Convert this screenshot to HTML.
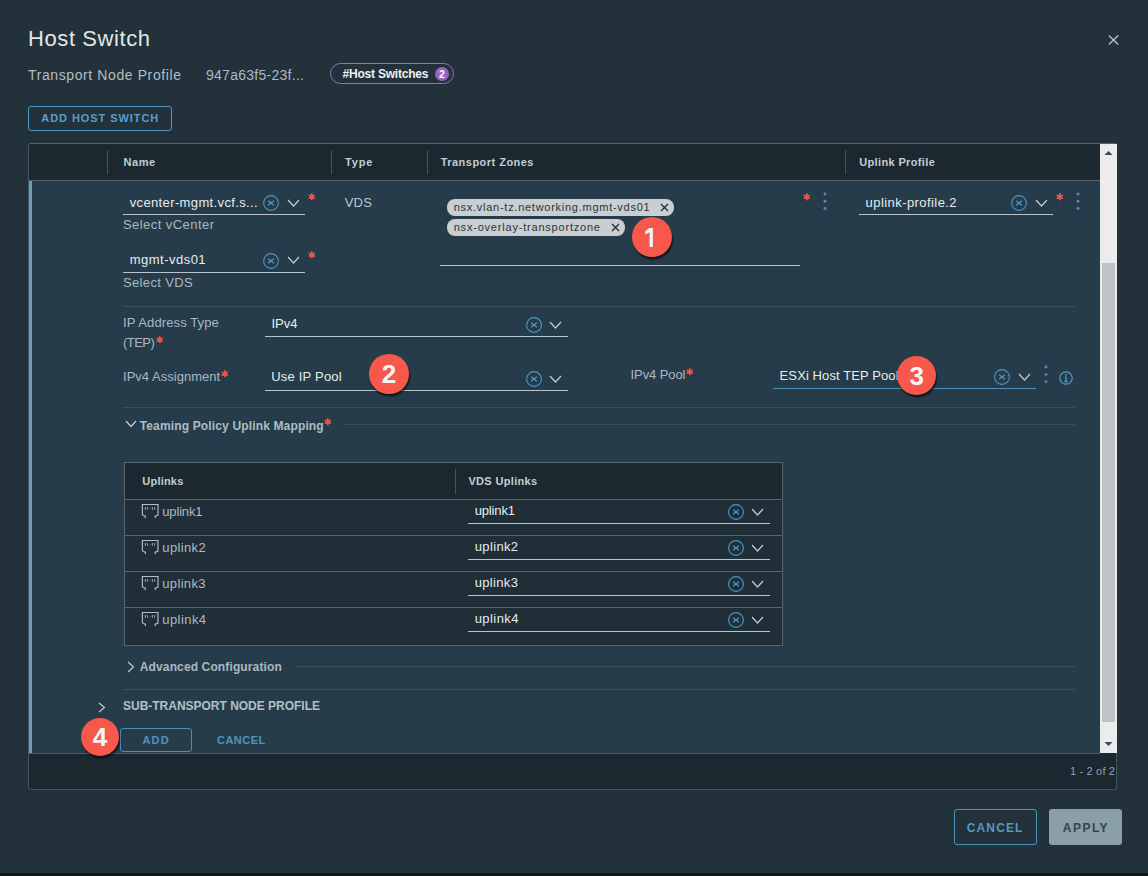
<!DOCTYPE html><html><head><meta charset="utf-8"><style>html,body{margin:0;padding:0;}body{width:1148px;height:876px;overflow:hidden;position:relative;background:#22313a;font-family:'Liberation Sans', sans-serif;}</style></head><body><div style="position:absolute;left:0px;top:873px;width:1148px;height:3px;background:#0f161a"></div>
<div style="position:absolute;left:28px;top:28.38px;font:400 22px/22px 'Liberation Sans', sans-serif;color:#e1e7ea;white-space:nowrap;letter-spacing:0.584px;">Host Switch</div>
<svg style="position:absolute;left:1108px;top:35px" width="11" height="10" viewBox="0 0 11 10"><path d="M0.8 0.5L10.2 9.5M10.2 0.5L0.8 9.5" stroke="#b8c6ce" stroke-width="1.3"/></svg>
<div style="position:absolute;left:28px;top:68.15px;font:400 14px/14px 'Liberation Sans', sans-serif;color:#b0bec6;white-space:nowrap;letter-spacing:0.603px;">Transport Node Profile</div>
<div style="position:absolute;left:206px;top:68.15px;font:400 14px/14px 'Liberation Sans', sans-serif;color:#a9b9c3;white-space:nowrap;letter-spacing:0.272px;">947a63f5-23f...</div>
<div style="position:absolute;left:330px;top:63px;width:124px;height:21px;box-sizing:border-box;border:1px solid #9a6cc4;border-radius:11px"></div>
<div style="position:absolute;left:342.5px;top:67.84px;font:700 12px/12px 'Liberation Sans', sans-serif;color:#eef0f2;white-space:nowrap;letter-spacing:-0.208px;">#Host Switches</div>
<div style="position:absolute;left:435px;top:67px;width:14px;height:14px;border-radius:50%;background:#9862c0"></div>
<div style="position:absolute;left:439.1px;top:69.01px;font:700 10.5px/10.5px 'Liberation Sans', sans-serif;color:#ffffff;white-space:nowrap;">2</div>
<div style="position:absolute;left:28px;top:106px;width:144px;height:25px;box-sizing:border-box;border:1px solid #5597c4;border-radius:3px"></div>
<div style="position:absolute;left:41.3px;top:112.69px;font:700 11px/11px 'Liberation Sans', sans-serif;color:#599dc9;white-space:nowrap;letter-spacing:0.936px;">ADD HOST SWITCH</div>
<div style="position:absolute;left:28px;top:143px;width:1089px;height:647px;box-sizing:border-box;border:1px solid #44555f;border-top-color:#56656e;border-radius:3px;background:#1b2830"></div>
<div style="position:absolute;left:107px;top:150px;width:1px;height:24px;background:#45535c"></div>
<div style="position:absolute;left:331px;top:150px;width:1px;height:24px;background:#45535c"></div>
<div style="position:absolute;left:427px;top:150px;width:1px;height:24px;background:#45535c"></div>
<div style="position:absolute;left:845px;top:150px;width:1px;height:24px;background:#45535c"></div>
<div style="position:absolute;left:123.4px;top:157.19px;font:700 11px/11px 'Liberation Sans', sans-serif;color:#c3cdd3;white-space:nowrap;letter-spacing:0.610px;">Name</div>
<div style="position:absolute;left:344.9px;top:157.19px;font:700 11px/11px 'Liberation Sans', sans-serif;color:#c3cdd3;white-space:nowrap;letter-spacing:0.914px;">Type</div>
<div style="position:absolute;left:440.7px;top:157.19px;font:700 11px/11px 'Liberation Sans', sans-serif;color:#c3cdd3;white-space:nowrap;letter-spacing:0.472px;">Transport Zones</div>
<div style="position:absolute;left:859.2px;top:157.19px;font:700 11px/11px 'Liberation Sans', sans-serif;color:#c3cdd3;white-space:nowrap;letter-spacing:0.361px;">Uplink Profile</div>
<div style="position:absolute;left:29px;top:180px;width:1071px;height:1px;background:#55656f"></div>
<div style="position:absolute;left:29px;top:181px;width:1071px;height:572px;background:#263c4a"></div>
<div style="position:absolute;left:29px;top:181px;width:3px;height:572px;background:#6a9fba"></div>
<div style="position:absolute;left:1100px;top:144px;width:17px;height:609px;background:#ececec"></div>
<div style="position:absolute;left:1102px;top:263px;width:13px;height:459px;background:#bec3c6"></div>
<svg style="position:absolute;left:1104px;top:150px" width="9" height="6" viewBox="0 0 9 6"><path d="M0.5 5L4.5 1L8.5 5Z" fill="#3a4a54"/></svg>
<svg style="position:absolute;left:1104px;top:741px" width="9" height="6" viewBox="0 0 9 6"><path d="M0.5 1L4.5 5L8.5 1Z" fill="#3a4a54"/></svg>
<div style="position:absolute;left:29px;top:753px;width:1071px;height:1px;background:#4a5a64"></div>
<div style="position:absolute;left:1070px;top:766.29px;font:400 11px/11px 'Liberation Sans', sans-serif;color:#8ea2ae;white-space:nowrap;letter-spacing:0.175px;">1 - 2 of 2</div>
<div style="position:absolute;left:129.7px;top:195.60px;font:400 13px/13px 'Liberation Sans', sans-serif;color:#e6ecef;white-space:nowrap;letter-spacing:0.368px;">vcenter-mgmt.vcf.s...</div>
<div style="position:absolute;left:123px;top:214px;width:182px;height:1px;background:#b9c4ca"></div>
<svg style="position:absolute;left:263.0px;top:195.0px" width="16" height="16" viewBox="0 0 16 16"><circle cx="8.0" cy="8.0" r="7.4" fill="none" stroke="#4a98c8" stroke-width="1.1"/><path d="M5.1 5.7L10.9 10.3M10.9 5.7L5.1 10.3" stroke="#4a98c8" stroke-width="1.3"/></svg>
<svg style="position:absolute;left:286.9px;top:198.5px" width="13" height="8" viewBox="-1 -1 13 8"><path d="M0 0L5.5 6L11 0" fill="none" stroke="#c3ccd2" stroke-width="1.2"/></svg>
<svg style="position:absolute;left:308.2px;top:193.2px" width="7.6" height="7.6" viewBox="-1 -1 7.6 7.6"><path d="M2.80 0.00L2.80 5.60M0.38 1.40L5.22 4.20M0.38 4.20L5.22 1.40" stroke="#ef5548" stroke-width="1.75" stroke-linecap="round"/></svg>
<div style="position:absolute;left:123px;top:218.00px;font:400 13px/13px 'Liberation Sans', sans-serif;color:#a9b8c1;white-space:nowrap;letter-spacing:0.441px;">Select vCenter</div>
<div style="position:absolute;left:129.7px;top:253.00px;font:400 13px/13px 'Liberation Sans', sans-serif;color:#e6ecef;white-space:nowrap;letter-spacing:0.485px;">mgmt-vds01</div>
<div style="position:absolute;left:123px;top:272px;width:182px;height:1px;background:#b9c4ca"></div>
<svg style="position:absolute;left:263.0px;top:252.5px" width="16" height="16" viewBox="0 0 16 16"><circle cx="8.0" cy="8.0" r="7.4" fill="none" stroke="#4a98c8" stroke-width="1.1"/><path d="M5.1 5.7L10.9 10.3M10.9 5.7L5.1 10.3" stroke="#4a98c8" stroke-width="1.3"/></svg>
<svg style="position:absolute;left:286.9px;top:256.0px" width="13" height="8" viewBox="-1 -1 13 8"><path d="M0 0L5.5 6L11 0" fill="none" stroke="#c3ccd2" stroke-width="1.2"/></svg>
<svg style="position:absolute;left:308.2px;top:251.2px" width="7.6" height="7.6" viewBox="-1 -1 7.6 7.6"><path d="M2.80 0.00L2.80 5.60M0.38 1.40L5.22 4.20M0.38 4.20L5.22 1.40" stroke="#ef5548" stroke-width="1.75" stroke-linecap="round"/></svg>
<div style="position:absolute;left:123px;top:275.60px;font:400 13px/13px 'Liberation Sans', sans-serif;color:#a9b8c1;white-space:nowrap;letter-spacing:0.357px;">Select VDS</div>
<div style="position:absolute;left:344.7px;top:196.30px;font:400 13px/13px 'Liberation Sans', sans-serif;color:#b9c6cd;white-space:nowrap;letter-spacing:0.233px;">VDS</div>
<div style="position:absolute;left:447px;top:199px;width:227px;height:16.5px;box-sizing:border-box;background:#c9ced1;border-radius:8px"></div>
<div style="position:absolute;left:453.7px;top:201.69px;font:400 11px/11px 'Liberation Sans', sans-serif;color:#26353f;white-space:nowrap;letter-spacing:0.737px;">nsx.vlan-tz.networking.mgmt-vds01</div>
<svg style="position:absolute;left:660px;top:202.5px" width="9" height="9" viewBox="0 0 9 9"><path d="M1 1L8 8M8 1L1 8" stroke="#1f2e36" stroke-width="1.3"/></svg>
<div style="position:absolute;left:447px;top:219px;width:178px;height:16.5px;box-sizing:border-box;background:#c9ced1;border-radius:8px"></div>
<div style="position:absolute;left:453.7px;top:221.69px;font:400 11px/11px 'Liberation Sans', sans-serif;color:#26353f;white-space:nowrap;letter-spacing:0.797px;">nsx-overlay-transportzone</div>
<svg style="position:absolute;left:611px;top:222.5px" width="9" height="9" viewBox="0 0 9 9"><path d="M1 1L8 8M8 1L1 8" stroke="#1f2e36" stroke-width="1.3"/></svg>
<div style="position:absolute;left:440px;top:265px;width:360px;height:1px;background:#b9c4ca"></div>
<svg style="position:absolute;left:802.9000000000001px;top:193.2px" width="7.6" height="7.6" viewBox="-1 -1 7.6 7.6"><path d="M2.80 0.00L2.80 5.60M0.38 1.40L5.22 4.20M0.38 4.20L5.22 1.40" stroke="#ef5548" stroke-width="1.75" stroke-linecap="round"/></svg>
<svg style="position:absolute;left:821.6px;top:190.5px" width="6" height="20.5" viewBox="0 0 6 20.5"><circle cx="3" cy="3.00" r="1.45" fill="#4f8fb8"/><circle cx="3" cy="10.30" r="1.45" fill="#4f8fb8"/><circle cx="3" cy="17.50" r="1.45" fill="#4f8fb8"/></svg>
<div style="position:absolute;left:865.6px;top:196.00px;font:400 13px/13px 'Liberation Sans', sans-serif;color:#e6ecef;white-space:nowrap;letter-spacing:0.430px;">uplink-profile.2</div>
<div style="position:absolute;left:859px;top:214px;width:194px;height:1px;background:#b9c4ca"></div>
<svg style="position:absolute;left:1011.0px;top:195.0px" width="16" height="16" viewBox="0 0 16 16"><circle cx="8.0" cy="8.0" r="7.4" fill="none" stroke="#4a98c8" stroke-width="1.1"/><path d="M5.1 5.7L10.9 10.3M10.9 5.7L5.1 10.3" stroke="#4a98c8" stroke-width="1.3"/></svg>
<svg style="position:absolute;left:1034.5px;top:199.0px" width="13" height="8" viewBox="-1 -1 13 8"><path d="M0 0L5.5 6L11 0" fill="none" stroke="#c3ccd2" stroke-width="1.2"/></svg>
<svg style="position:absolute;left:1055.7px;top:193.2px" width="7.6" height="7.6" viewBox="-1 -1 7.6 7.6"><path d="M2.80 0.00L2.80 5.60M0.38 1.40L5.22 4.20M0.38 4.20L5.22 1.40" stroke="#ef5548" stroke-width="1.75" stroke-linecap="round"/></svg>
<svg style="position:absolute;left:1075px;top:190.5px" width="6" height="20.5" viewBox="0 0 6 20.5"><circle cx="3" cy="3.00" r="1.45" fill="#4f8fb8"/><circle cx="3" cy="10.30" r="1.45" fill="#4f8fb8"/><circle cx="3" cy="17.50" r="1.45" fill="#4f8fb8"/></svg>
<div style="position:absolute;left:123px;top:306px;width:952px;height:1px;background:#3a4f5c"></div>
<div style="position:absolute;left:123px;top:316.40px;font:400 13px/13px 'Liberation Sans', sans-serif;color:#a9b8c1;white-space:nowrap;letter-spacing:0.114px;">IP Address Type</div>
<div style="position:absolute;left:123px;top:336.30px;font:400 13px/13px 'Liberation Sans', sans-serif;color:#a9b8c1;white-space:nowrap;letter-spacing:-0.538px;">(TEP)</div>
<svg style="position:absolute;left:155.79999999999998px;top:335.7px" width="7.6" height="7.6" viewBox="-1 -1 7.6 7.6"><path d="M2.80 0.00L2.80 5.60M0.38 1.40L5.22 4.20M0.38 4.20L5.22 1.40" stroke="#ef5548" stroke-width="1.75" stroke-linecap="round"/></svg>
<div style="position:absolute;left:271.4px;top:317.00px;font:400 13px/13px 'Liberation Sans', sans-serif;color:#e6ecef;white-space:nowrap;letter-spacing:0.061px;">IPv4</div>
<div style="position:absolute;left:265px;top:336px;width:303px;height:1px;background:#b9c4ca"></div>
<svg style="position:absolute;left:525.5px;top:316.8px" width="16" height="16" viewBox="0 0 16 16"><circle cx="8.0" cy="8.0" r="7.4" fill="none" stroke="#4a98c8" stroke-width="1.1"/><path d="M5.1 5.7L10.9 10.3M10.9 5.7L5.1 10.3" stroke="#4a98c8" stroke-width="1.3"/></svg>
<svg style="position:absolute;left:549.1px;top:320.5px" width="13" height="8" viewBox="-1 -1 13 8"><path d="M0 0L5.5 6L11 0" fill="none" stroke="#c3ccd2" stroke-width="1.2"/></svg>
<div style="position:absolute;left:123px;top:369.70px;font:400 13px/13px 'Liberation Sans', sans-serif;color:#a9b8c1;white-space:nowrap;letter-spacing:0.027px;">IPv4 Assignment</div>
<svg style="position:absolute;left:220.7px;top:369.7px" width="7.6" height="7.6" viewBox="-1 -1 7.6 7.6"><path d="M2.80 0.00L2.80 5.60M0.38 1.40L5.22 4.20M0.38 4.20L5.22 1.40" stroke="#ef5548" stroke-width="1.75" stroke-linecap="round"/></svg>
<div style="position:absolute;left:271.2px;top:370.40px;font:400 13px/13px 'Liberation Sans', sans-serif;color:#e6ecef;white-space:nowrap;letter-spacing:0.208px;">Use IP Pool</div>
<div style="position:absolute;left:265px;top:390px;width:303px;height:1px;background:#b9c4ca"></div>
<svg style="position:absolute;left:525.5px;top:370.7px" width="16" height="16" viewBox="0 0 16 16"><circle cx="8.0" cy="8.0" r="7.4" fill="none" stroke="#4a98c8" stroke-width="1.1"/><path d="M5.1 5.7L10.9 10.3M10.9 5.7L5.1 10.3" stroke="#4a98c8" stroke-width="1.3"/></svg>
<svg style="position:absolute;left:549.1px;top:374.5px" width="13" height="8" viewBox="-1 -1 13 8"><path d="M0 0L5.5 6L11 0" fill="none" stroke="#c3ccd2" stroke-width="1.2"/></svg>
<div style="position:absolute;left:630.6px;top:368.00px;font:400 13px/13px 'Liberation Sans', sans-serif;color:#a9b8c1;white-space:nowrap;letter-spacing:-0.095px;">IPv4 Pool</div>
<svg style="position:absolute;left:685.6px;top:367.7px" width="7.6" height="7.6" viewBox="-1 -1 7.6 7.6"><path d="M2.80 0.00L2.80 5.60M0.38 1.40L5.22 4.20M0.38 4.20L5.22 1.40" stroke="#ef5548" stroke-width="1.75" stroke-linecap="round"/></svg>
<div style="position:absolute;left:779.6px;top:368.80px;font:400 13px/13px 'Liberation Sans', sans-serif;color:#e6ecef;white-space:nowrap;letter-spacing:0.099px;">ESXi Host TEP Pool</div>
<div style="position:absolute;left:773px;top:388px;width:263px;height:1px;background:#4b8fb8"></div>
<svg style="position:absolute;left:994.0px;top:368.7px" width="16" height="16" viewBox="0 0 16 16"><circle cx="8.0" cy="8.0" r="7.4" fill="none" stroke="#4a98c8" stroke-width="1.1"/><path d="M5.1 5.7L10.9 10.3M10.9 5.7L5.1 10.3" stroke="#4a98c8" stroke-width="1.3"/></svg>
<svg style="position:absolute;left:1017.5px;top:372.5px" width="13" height="8" viewBox="-1 -1 13 8"><path d="M0 0L5.5 6L11 0" fill="none" stroke="#c3ccd2" stroke-width="1.2"/></svg>
<svg style="position:absolute;left:1043px;top:364.4px" width="6" height="20.600000000000023" viewBox="0 0 6 20.600000000000023"><circle cx="3" cy="3.00" r="1.45" fill="#4f8fb8"/><circle cx="3" cy="10.60" r="1.45" fill="#4f8fb8"/><circle cx="3" cy="17.60" r="1.45" fill="#4f8fb8"/></svg>
<svg style="position:absolute;left:1059px;top:371px" width="14" height="14" viewBox="0 0 14 14"><circle cx="7" cy="7" r="6.2" fill="none" stroke="#4b9fd0" stroke-width="1.2"/><path d="M7 5.8V10.5M5.5 10.5H8.5M6 6H7" stroke="#4b9fd0" stroke-width="1.3"/><circle cx="7" cy="3.9" r="0.9" fill="#4b9fd0"/></svg>
<div style="position:absolute;left:123px;top:407px;width:952px;height:1px;background:#3a4f5c"></div>
<svg style="position:absolute;left:125.0px;top:420.25px" width="12" height="7.5" viewBox="-1 -1 12 7.5"><path d="M0 0L5.0 5.5L10 0" fill="none" stroke="#c3ccd2" stroke-width="1.2"/></svg>
<div style="position:absolute;left:139.7px;top:419.74px;font:700 12px/12px 'Liberation Sans', sans-serif;color:#adbcc5;white-space:nowrap;letter-spacing:0.150px;">Teaming Policy Uplink Mapping</div>
<svg style="position:absolute;left:323.7px;top:418.2px" width="7.6" height="7.6" viewBox="-1 -1 7.6 7.6"><path d="M2.80 0.00L2.80 5.60M0.38 1.40L5.22 4.20M0.38 4.20L5.22 1.40" stroke="#ef5548" stroke-width="1.75" stroke-linecap="round"/></svg>
<div style="position:absolute;left:343px;top:424px;width:732px;height:1px;background:#3a4f5c"></div>
<div style="position:absolute;left:124px;top:462px;width:659px;height:184px;box-sizing:border-box;border:1px solid #56656e;background:#202e37"></div>
<div style="position:absolute;left:125px;top:463px;width:657px;height:36px;background:#1b2830"></div>
<div style="position:absolute;left:455px;top:469px;width:1px;height:25px;background:#45535c"></div>
<div style="position:absolute;left:142.3px;top:475.99px;font:700 11px/11px 'Liberation Sans', sans-serif;color:#c3cdd3;white-space:nowrap;letter-spacing:0.211px;">Uplinks</div>
<div style="position:absolute;left:468.4px;top:475.99px;font:700 11px/11px 'Liberation Sans', sans-serif;color:#c3cdd3;white-space:nowrap;letter-spacing:0.339px;">VDS Uplinks</div>
<div style="position:absolute;left:125px;top:499px;width:657px;height:1px;background:#55656f"></div>
<svg style="position:absolute;left:138px;top:500px" width="24" height="22" viewBox="0 0 24 22"><path d="M4.4 15V4.5H20V15L17.2 16.1V18M4.4 15L7.3 16.1V18" fill="none" stroke="#b2c0c8" stroke-width="1.15"/><path d="M7.3 7V9.8M9.4 7V9.8M14.4 7V9.8M16.6 7V9.8" stroke="#9fb3bf" stroke-width="0.9"/><circle cx="12.3" cy="8.5" r="0.5" fill="#6a9ab8"/></svg>
<div style="position:absolute;left:162.3px;top:504.90px;font:400 13px/13px 'Liberation Sans', sans-serif;color:#adbbc4;white-space:nowrap;letter-spacing:-0.167px;">uplink1</div>
<div style="position:absolute;left:474.7px;top:503.70px;font:400 13px/13px 'Liberation Sans', sans-serif;color:#e6ecef;white-space:nowrap;letter-spacing:-0.151px;">uplink1</div>
<div style="position:absolute;left:468px;top:523px;width:302px;height:1px;background:#b9c4ca"></div>
<svg style="position:absolute;left:728.0px;top:504.0px" width="16" height="16" viewBox="0 0 16 16"><circle cx="8.0" cy="8.0" r="7.4" fill="none" stroke="#4a98c8" stroke-width="1.1"/><path d="M5.1 5.7L10.9 10.3M10.9 5.7L5.1 10.3" stroke="#4a98c8" stroke-width="1.3"/></svg>
<svg style="position:absolute;left:751.3px;top:507.5px" width="13" height="8" viewBox="-1 -1 13 8"><path d="M0 0L5.5 6L11 0" fill="none" stroke="#c3ccd2" stroke-width="1.2"/></svg>
<div style="position:absolute;left:125px;top:535px;width:657px;height:1px;background:#55656f"></div>
<svg style="position:absolute;left:138px;top:536px" width="24" height="22" viewBox="0 0 24 22"><path d="M4.4 15V4.5H20V15L17.2 16.1V18M4.4 15L7.3 16.1V18" fill="none" stroke="#b2c0c8" stroke-width="1.15"/><path d="M7.3 7V9.8M9.4 7V9.8M14.4 7V9.8M16.6 7V9.8" stroke="#9fb3bf" stroke-width="0.9"/><circle cx="12.3" cy="8.5" r="0.5" fill="#6a9ab8"/></svg>
<div style="position:absolute;left:162.3px;top:540.90px;font:400 13px/13px 'Liberation Sans', sans-serif;color:#adbbc4;white-space:nowrap;letter-spacing:0.366px;">uplink2</div>
<div style="position:absolute;left:474.7px;top:539.70px;font:400 13px/13px 'Liberation Sans', sans-serif;color:#e6ecef;white-space:nowrap;letter-spacing:0.366px;">uplink2</div>
<div style="position:absolute;left:468px;top:559px;width:302px;height:1px;background:#b9c4ca"></div>
<svg style="position:absolute;left:728.0px;top:540.0px" width="16" height="16" viewBox="0 0 16 16"><circle cx="8.0" cy="8.0" r="7.4" fill="none" stroke="#4a98c8" stroke-width="1.1"/><path d="M5.1 5.7L10.9 10.3M10.9 5.7L5.1 10.3" stroke="#4a98c8" stroke-width="1.3"/></svg>
<svg style="position:absolute;left:751.3px;top:543.5px" width="13" height="8" viewBox="-1 -1 13 8"><path d="M0 0L5.5 6L11 0" fill="none" stroke="#c3ccd2" stroke-width="1.2"/></svg>
<div style="position:absolute;left:125px;top:571px;width:657px;height:1px;background:#55656f"></div>
<svg style="position:absolute;left:138px;top:572px" width="24" height="22" viewBox="0 0 24 22"><path d="M4.4 15V4.5H20V15L17.2 16.1V18M4.4 15L7.3 16.1V18" fill="none" stroke="#b2c0c8" stroke-width="1.15"/><path d="M7.3 7V9.8M9.4 7V9.8M14.4 7V9.8M16.6 7V9.8" stroke="#9fb3bf" stroke-width="0.9"/><circle cx="12.3" cy="8.5" r="0.5" fill="#6a9ab8"/></svg>
<div style="position:absolute;left:162.3px;top:576.90px;font:400 13px/13px 'Liberation Sans', sans-serif;color:#adbbc4;white-space:nowrap;letter-spacing:0.333px;">uplink3</div>
<div style="position:absolute;left:474.7px;top:575.70px;font:400 13px/13px 'Liberation Sans', sans-serif;color:#e6ecef;white-space:nowrap;letter-spacing:0.333px;">uplink3</div>
<div style="position:absolute;left:468px;top:595px;width:302px;height:1px;background:#b9c4ca"></div>
<svg style="position:absolute;left:728.0px;top:576.0px" width="16" height="16" viewBox="0 0 16 16"><circle cx="8.0" cy="8.0" r="7.4" fill="none" stroke="#4a98c8" stroke-width="1.1"/><path d="M5.1 5.7L10.9 10.3M10.9 5.7L5.1 10.3" stroke="#4a98c8" stroke-width="1.3"/></svg>
<svg style="position:absolute;left:751.3px;top:579.5px" width="13" height="8" viewBox="-1 -1 13 8"><path d="M0 0L5.5 6L11 0" fill="none" stroke="#c3ccd2" stroke-width="1.2"/></svg>
<div style="position:absolute;left:125px;top:607px;width:657px;height:1px;background:#55656f"></div>
<svg style="position:absolute;left:138px;top:608px" width="24" height="22" viewBox="0 0 24 22"><path d="M4.4 15V4.5H20V15L17.2 16.1V18M4.4 15L7.3 16.1V18" fill="none" stroke="#b2c0c8" stroke-width="1.15"/><path d="M7.3 7V9.8M9.4 7V9.8M14.4 7V9.8M16.6 7V9.8" stroke="#9fb3bf" stroke-width="0.9"/><circle cx="12.3" cy="8.5" r="0.5" fill="#6a9ab8"/></svg>
<div style="position:absolute;left:162.3px;top:612.90px;font:400 13px/13px 'Liberation Sans', sans-serif;color:#adbbc4;white-space:nowrap;letter-spacing:0.433px;">uplink4</div>
<div style="position:absolute;left:474.7px;top:611.70px;font:400 13px/13px 'Liberation Sans', sans-serif;color:#e6ecef;white-space:nowrap;letter-spacing:0.433px;">uplink4</div>
<div style="position:absolute;left:468px;top:631px;width:302px;height:1px;background:#b9c4ca"></div>
<svg style="position:absolute;left:728.0px;top:612.0px" width="16" height="16" viewBox="0 0 16 16"><circle cx="8.0" cy="8.0" r="7.4" fill="none" stroke="#4a98c8" stroke-width="1.1"/><path d="M5.1 5.7L10.9 10.3M10.9 5.7L5.1 10.3" stroke="#4a98c8" stroke-width="1.3"/></svg>
<svg style="position:absolute;left:751.3px;top:615.5px" width="13" height="8" viewBox="-1 -1 13 8"><path d="M0 0L5.5 6L11 0" fill="none" stroke="#c3ccd2" stroke-width="1.2"/></svg>
<svg style="position:absolute;left:127px;top:661px" width="7.5" height="12" viewBox="-1 -1 7.5 12"><path d="M0 0L5.5 5.0L0 10" fill="none" stroke="#c3ccd2" stroke-width="1.2"/></svg>
<div style="position:absolute;left:139.8px;top:661.04px;font:700 12px/12px 'Liberation Sans', sans-serif;color:#a9b8c1;white-space:nowrap;letter-spacing:0.126px;">Advanced Configuration</div>
<div style="position:absolute;left:294.6px;top:666px;width:780.4px;height:1px;background:#3a4f5c"></div>
<div style="position:absolute;left:123px;top:689px;width:952px;height:1px;background:#3a4f5c"></div>
<svg style="position:absolute;left:98px;top:701.7px" width="7.5" height="11" viewBox="-1 -1 7.5 11"><path d="M0 0L5.5 4.5L0 9" fill="none" stroke="#c3ccd2" stroke-width="1.2"/></svg>
<div style="position:absolute;left:123px;top:700.34px;font:700 12px/12px 'Liberation Sans', sans-serif;color:#b3c0c8;white-space:nowrap;letter-spacing:-0.014px;">SUB-TRANSPORT NODE PROFILE</div>
<div style="position:absolute;left:120.3px;top:728.2px;width:71.7px;height:23.8px;box-sizing:border-box;border:1px solid #4f8cb6;border-radius:3px"></div>
<div style="position:absolute;left:142.6px;top:734.89px;font:700 11px/11px 'Liberation Sans', sans-serif;color:#5592bd;white-space:nowrap;letter-spacing:1.078px;">ADD</div>
<div style="position:absolute;left:217px;top:734.89px;font:700 11px/11px 'Liberation Sans', sans-serif;color:#5592bd;white-space:nowrap;letter-spacing:0.491px;">CANCEL</div>
<div style="position:absolute;left:954px;top:809px;width:83px;height:36px;box-sizing:border-box;border:1px solid #4f91bd;border-radius:3px"></div>
<div style="position:absolute;left:966.8px;top:821.94px;font:700 12px/12px 'Liberation Sans', sans-serif;color:#5898c4;white-space:nowrap;letter-spacing:1.120px;">CANCEL</div>
<div style="position:absolute;left:1049px;top:809px;width:73px;height:36px;background:#8a9fa8;border-radius:3px"></div>
<div style="position:absolute;left:1062.8px;top:821.94px;font:700 12px/12px 'Liberation Sans', sans-serif;color:#34454f;white-space:nowrap;letter-spacing:1.473px;">APPLY</div>
<div style="position:absolute;left:632.0px;top:217.0px;width:40px;height:40px;border-radius:50%;background:#f6584b;box-shadow:1px 2.5px 1.5px rgba(0,0,0,0.6)"></div>
<svg style="position:absolute;left:644px;top:227px" width="16" height="20" viewBox="0 0 16 20"><path d="M5.3 1.1H8.9V20H5.6V5.2L1.2 7.4V4.3Z" fill="#f4f4f4"/></svg>
<div style="position:absolute;left:369.2px;top:354.2px;width:39.6px;height:39.6px;border-radius:50%;background:#f6584b;box-shadow:1px 2.5px 1.5px rgba(0,0,0,0.6)"></div>
<div style="position:absolute;left:381.7px;top:361.49px;font:700 26px/26px 'Liberation Sans', sans-serif;color:#f4f4f4;white-space:nowrap;">2</div>
<div style="position:absolute;left:897.2px;top:356.0px;width:39px;height:39px;border-radius:50%;background:#f6584b;box-shadow:1px 2.5px 1.5px rgba(0,0,0,0.6)"></div>
<div style="position:absolute;left:909.4000000000001px;top:362.99px;font:700 26px/26px 'Liberation Sans', sans-serif;color:#f4f4f4;white-space:nowrap;">3</div>
<div style="position:absolute;left:80.75px;top:717.75px;width:38.5px;height:38.5px;border-radius:50%;background:#f6584b;box-shadow:1px 2.5px 1.5px rgba(0,0,0,0.6)"></div>
<div style="position:absolute;left:92.7px;top:724.49px;font:700 26px/26px 'Liberation Sans', sans-serif;color:#f4f4f4;white-space:nowrap;">4</div></body></html>
